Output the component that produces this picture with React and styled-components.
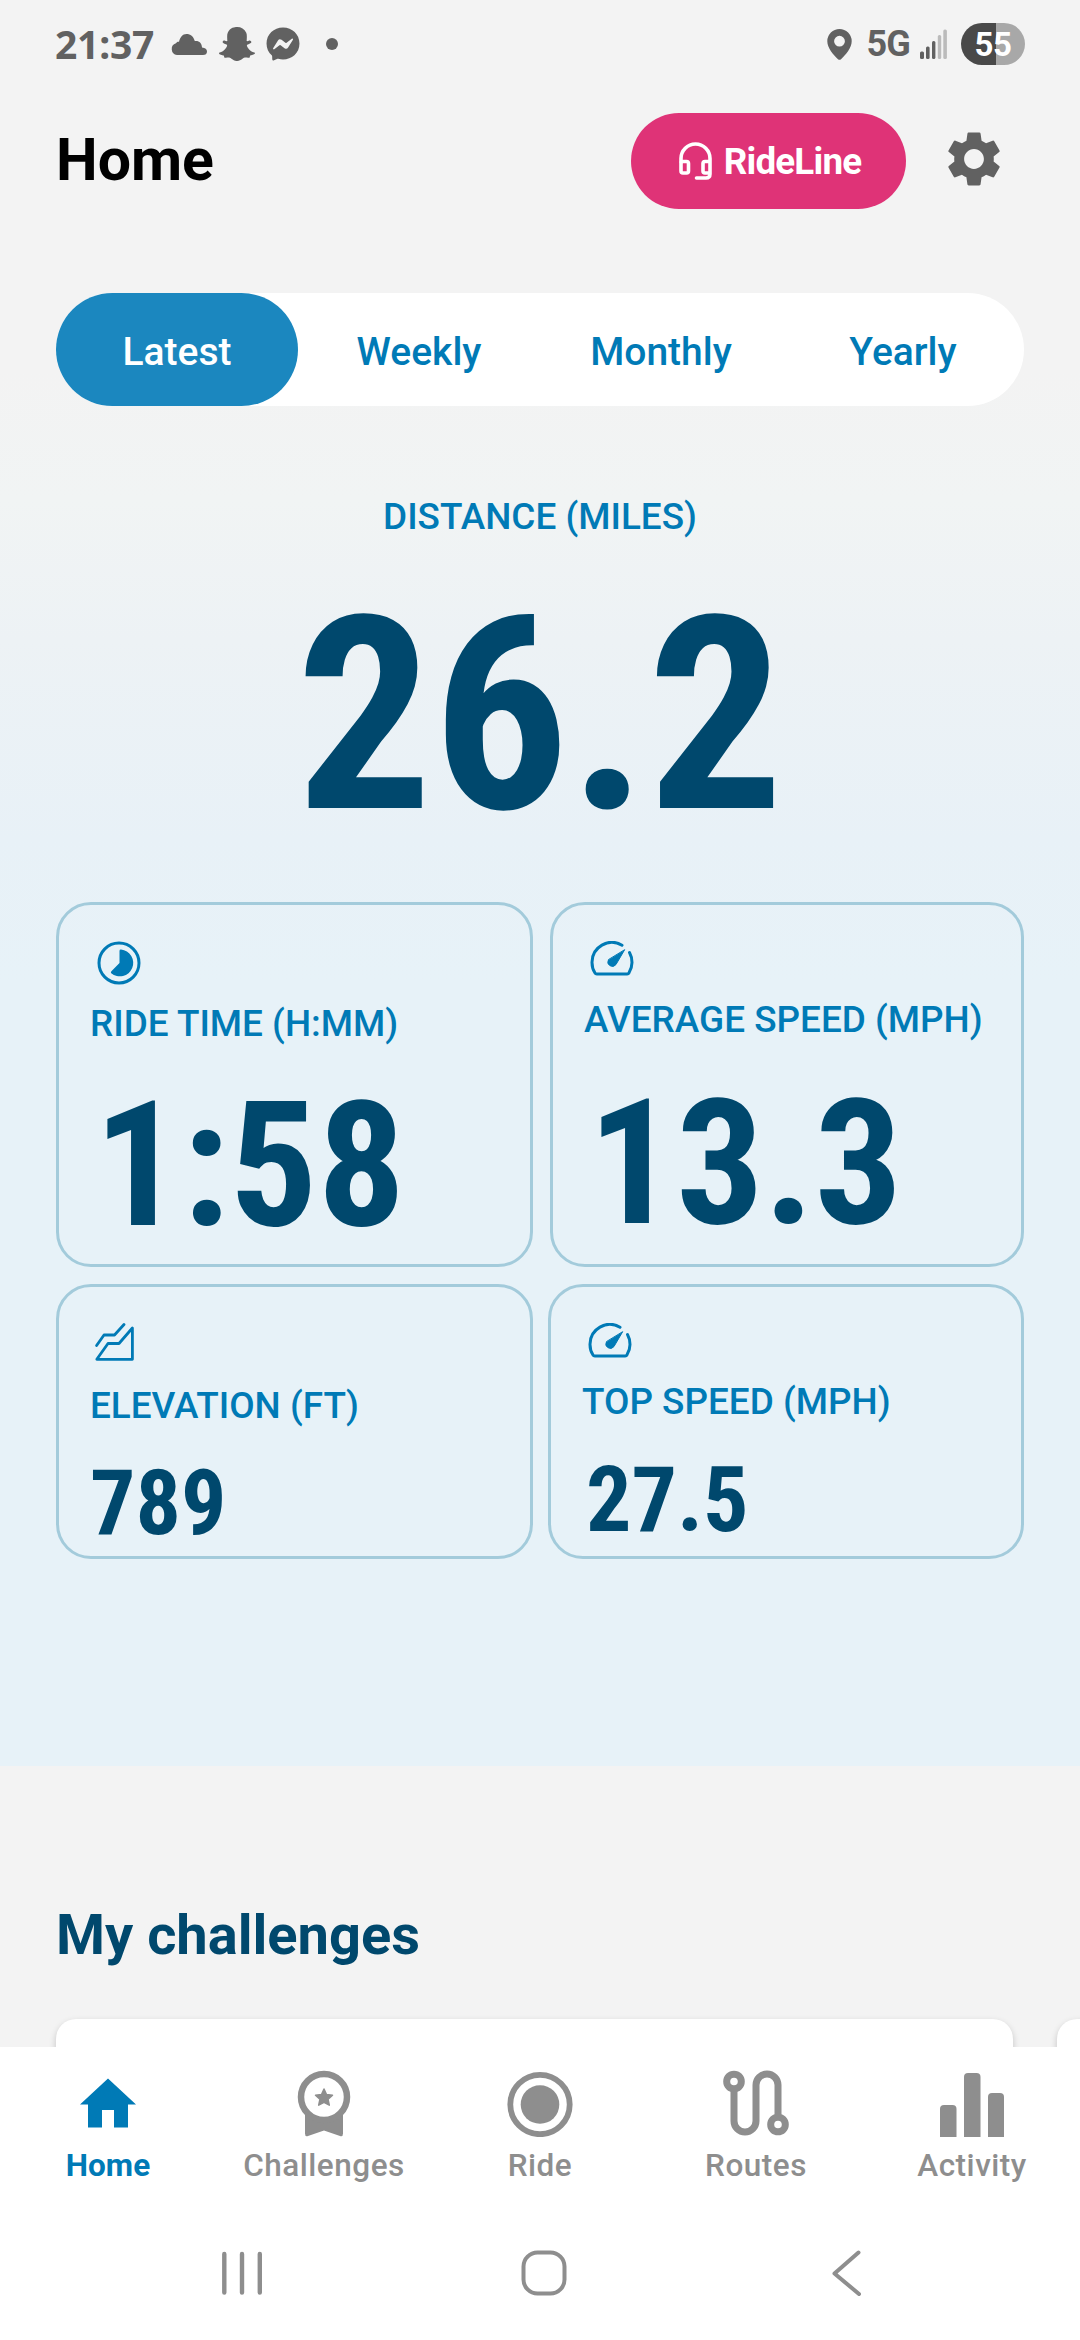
import React from "react";
import styled, { createGlobalStyle } from "styled-components";
import { FaSnapchatGhost, FaFacebookMessenger } from "react-icons/fa";
import { MdSettings } from "react-icons/md";

const color = {
  page: "#f3f3f3",
  blue: "#007ab6",
  tab: "#1b87bf",
  navy: "#00486d",
  pink: "#df3377",
  outline: "#a3cbdb",
  sky: "#e7f2f8",
  status: "#616161",
  muted: "#8e8e8e",
};

const GlobalStyle = createGlobalStyle`
  *, *::before, *::after { box-sizing: border-box; }
  body { margin: 0; background: ${color.page}; font-family: Roboto, "Liberation Sans", sans-serif; }
  svg { display: block; flex: none; }
  h1, h2, p { margin: 0; }
  button { border: 0; padding: 0; background: none; font-family: inherit; }
`;

const Screen = styled.div`
  width: 1080px;
  height: 2340px;
  display: flex;
  flex-direction: column;
  overflow: hidden;
  background: ${color.page};
`;

const Scroll = styled.main`
  height: 2047px;
  flex: none;
  overflow: hidden;
`;

const Summary = styled.section`
  height: 1766px;
  background: linear-gradient(180deg, #f3f3f3 0px, #f3f3f3 370px, #f1f4f4 500px, #edf2f5 640px, #e8f1f7 840px, ${color.sky} 980px);
`;

/* ---------- status bar ---------- */

const StatusBar = styled.div`
  height: 88px;
  padding: 0 55px;
  display: flex;
  align-items: center;
  justify-content: space-between;
  color: ${color.status};
`;

const StatusGroup = styled.div`
  display: flex;
  align-items: center;
`;

const Clock = styled.span`
  width: 116px;
  padding-bottom: 1px;
  font: 700 39px/46px "Noto Sans", Roboto, sans-serif;
  letter-spacing: -0.2px;
`;

const StatusIcon = styled.span`
  margin-left: ${(p) => p.$gap}px;
  display: flex;
`;

const MoreDot = styled.span`
  width: 12px;
  height: 12px;
  margin-left: 26px;
  border-radius: 50%;
  background: ${color.status};
`;

const Network = styled.span`
  margin: 0 10px 0 14px;
  font-size: 36px;
  font-weight: 700;
  line-height: 46px;
  letter-spacing: -0.8px;
`;

const Battery = styled.span`
  width: 64px;
  height: 42px;
  margin-left: 13px;
  border-radius: 21px;
  background: linear-gradient(90deg, #494949 0 35px, #a8a8a8 35px);
  color: #fff;
  font-size: 33px;
  font-weight: 700;
  line-height: 43px;
  letter-spacing: -0.5px;
  text-align: center;
`;

/* ---------- header ---------- */

const Header = styled.header`
  height: 146px;
  padding: 0 80px 0 56px;
  display: flex;
  align-items: center;
`;

const Title = styled.h1`
  flex: 1;
  margin-top: -2px;
  color: #000;
  font-size: 59px;
  font-weight: 700;
  line-height: 70px;
`;

const RideLineButton = styled.button`
  width: 275px;
  height: 96px;
  margin-right: 41px;
  padding-left: 3px;
  border-radius: 48px;
  display: flex;
  align-items: center;
  justify-content: center;
  gap: 12px;
  background: ${color.pink};
  color: #fff;
  font-size: 36.75px;
  font-weight: 700;
  letter-spacing: -0.8px;
`;

const SettingsButton = styled.button`
  width: 53px;
  padding-bottom: 5px;
  display: flex;
  justify-content: center;
  color: ${color.status};
`;

/* ---------- tabs ---------- */

const Tabs = styled.nav`
  height: 113px;
  margin: 59px 56px 0;
  display: grid;
  grid-template-columns: repeat(4, 1fr);
  border-radius: 57px;
  background: #fff;
`;

const Tab = styled.button`
  height: 113px;
  padding-top: 4px;
  border-radius: 57px;
  background: ${(p) => (p.$active ? color.tab : "transparent")};
  color: ${(p) => (p.$active ? "#fff" : color.blue)};
  font-size: 39px;
  font-weight: 500;
  line-height: 50px;
`;

/* ---------- stats ---------- */

const Label = styled.p`
  color: ${color.blue};
  font-size: 36.9px;
  font-weight: 500;
  line-height: 46px;
  white-space: nowrap;
`;

const Value = styled.p`
  color: ${color.navy};
  font-family: "Roboto Condensed", Roboto, sans-serif;
  font-stretch: 75%;
  font-weight: 700;
  font-size: ${(p) => p.$size}px;
  line-height: 1.1;
  white-space: nowrap;
`;

const Hero = styled.div`
  height: 496px;
  padding-top: 88px;
  display: flex;
  flex-direction: column;
  align-items: center;
  gap: 28px;
`;

const CardRow = styled.div`
  margin: 0 56px 17px;
  display: grid;
  grid-template-columns: 477px 1fr;
  column-gap: ${(p) => p.$gap}px;
  height: ${(p) => p.$height}px;
`;

const Card = styled.article`
  padding: 36px 0 0 31px;
  border: 3px solid ${color.outline};
  border-radius: 35px;
  display: flex;
  flex-direction: column;
`;

const CardIcon = styled.div`
  height: ${(p) => p.$height}px;
  padding-left: ${(p) => p.$indent}px;
  color: ${color.blue};
`;

const CardValue = styled.div`
  padding: ${(p) => p.$top}px 0 0 ${(p) => p.$indent}px;
`;

/* ---------- challenges ---------- */

const Challenges = styled.section`
  padding: 135px 0 0 56px;
`;

const SectionTitle = styled.h2`
  color: ${color.navy};
  font-size: 56px;
  font-weight: 700;
  line-height: 68px;
`;

const Carousel = styled.div`
  margin-top: 50px;
  display: flex;
  gap: 44px;
`;

const ChallengeCard = styled.div`
  width: 957px;
  height: 320px;
  flex: none;
  border-radius: 20px;
  background: #fff;
  box-shadow: 0 3px 7px rgba(0, 0, 0, 0.2);
`;

/* ---------- bottom navigation ---------- */

const BottomNav = styled.nav`
  height: 159px;
  flex: none;
  display: grid;
  grid-template-columns: repeat(5, 1fr);
  background: #fff;
`;

const NavItem = styled.div`
  display: flex;
  flex-direction: column;
  align-items: center;
  color: ${(p) => (p.$active ? color.blue : color.muted)};
  font-size: 31.5px;
  font-weight: ${(p) => (p.$active ? 700 : 500)};
  line-height: 38px;
  letter-spacing: ${(p) => (p.$active ? 0.1 : 0.5)}px;
`;

const NavIcon = styled.div`
  height: 100px;
  padding-top: 20px;
`;

const SystemNav = styled.div`
  height: 134px;
  flex: none;
  padding: 42px 210px 0 217px;
  display: flex;
  justify-content: space-between;
  background: #fff;
`;

/* ---------- icons ---------- */

const CloudIcon = () => (
  <svg width="36" height="21" viewBox="0 0 36 21" fill="currentColor">
    <path d="M6 21a6 6 0 0 1-1-11.7C5.5 8.200 6.500 7.600 8 7.800 9 3.500 11.500 0 15.500 0c4 0 7 2.500 8.300 7 4.500-.5 7 2 7.200 6.500 3.300.2 5 1.800 5 3.900 0 2.200-1.500 3.600-4 3.600Z" />
  </svg>
);

const PinIcon = () => (
  <svg width="25" height="31" viewBox="0 0 25 31" fill="currentColor" fillRule="evenodd">
    <path d="M12.500 0A12.200 12.200 0 0 1 24.700 12.200C24.700 19 18.500 26 14 30.200q-1.500 1.300-3 0C6.500 26 .3 19 .3 12.200A12.200 12.200 0 0 1 12.500 0Zm0 6.800a5.400 5.400 0 1 0 0 10.800 5.400 5.400 0 0 0 0-10.800Z" />
  </svg>
);

const SignalIcon = () => (
  <svg width="28" height="30" viewBox="0 0 28 30" fill="currentColor">
    <rect x="0" y="22.500" width="4" height="7.500" rx="1.500" />
    <rect x="6" y="17.500" width="3.600" height="12.500" rx="1.500" />
    <rect x="12" y="12" width="3.400" height="18" rx="1.500" />
    <rect x="17.800" y="6" width="3.400" height="24" rx="1.500" opacity=".38" />
    <rect x="23.300" y="0.500" width="3.600" height="29.500" rx="1.500" opacity=".38" />
  </svg>
);

const HeadsetIcon = () => (
  <svg width="33" height="38" viewBox="0 0 33 38" fill="none" stroke="currentColor" strokeWidth="3.600">
    <path d="M2 20V16.500a14.500 14.500 0 0 1 29 0V32q0 4-4 4H17.500" strokeLinecap="round" />
    <rect x="2" y="19.500" width="7.500" height="11.500" rx="2" />
    <path d="M31 19.500h-5q-2 0-2 2V29q0 2 2 2h5" />
  </svg>
);

const TimeIcon = () => (
  <svg width="44" height="44" viewBox="0 0 44 44" fill="currentColor">
    <circle cx="22" cy="22" r="20" fill="none" stroke="currentColor" strokeWidth="3" />
    <path d="M22.500 22V10q0-1.500 1.500-1.400a13.400 13.400 0 1 1-9.800 23.600q-.8-.9.200-1.900Z" />
  </svg>
);

const SpeedIcon = () => (
  <svg width="44" height="36" viewBox="0 0 44 36" fill="none" stroke="currentColor" strokeWidth="3" strokeLinecap="round" strokeLinejoin="round">
    <path d="M32 4.300A19.800 19.800 0 0 0 2 21.500q0 6 3 10.500.6 1 1.800 1h30.400q1.200 0 1.700-1Q42 27 42 21.500q0-5.500-2.500-10" />
    <path d="M34.500 9 26 23.500a4.500 4.500 0 0 1-7.700-4.600Z" fill="currentColor" strokeWidth="1" />
  </svg>
);

const ElevationIcon = () => (
  <svg width="39" height="38" viewBox="0 0 39 38" fill="none" stroke="currentColor" strokeWidth="2.800" strokeLinecap="round" strokeLinejoin="round">
    <path d="M1.600 22.500 9 12h10.500L29 1.500" />
    <path d="M1.800 36.300 13 20.500h11L37.400 5v31.300Z" />
  </svg>
);

const HomeIcon = () => (
  <svg width="66" height="70" viewBox="0 0 66 70" fill="currentColor">
    <path d="M33 11.500 61 37.500H53V60.500H39V43H27V60.500H13V37.500H5Z" />
  </svg>
);

const BadgeIcon = () => (
  <svg width="66" height="70" viewBox="0 0 66 70" fill="currentColor">
    <path d="M14 44H52V66.500q0 3.500-3 2.500L33 63.500 17 69q-3 1-3-2.500Z" />
    <circle cx="33" cy="30" r="23" fill="#fff" stroke="currentColor" strokeWidth="6.500" />
    <path d="m33 22 2.500 5.500 6 .7-4.400 4.100 1.200 5.900L33 35.300l-5.300 2.900 1.200-5.900-4.400-4.100 6-.7Z" stroke="currentColor" strokeWidth="1.500" strokeLinejoin="round" />
  </svg>
);

const RideIcon = () => (
  <svg width="66" height="70" viewBox="0 0 66 70" fill="currentColor">
    <circle cx="33" cy="37.500" r="29.700" fill="none" stroke="currentColor" strokeWidth="5.800" />
    <circle cx="33" cy="37.500" r="19.300" />
  </svg>
);

const RoutesIcon = () => (
  <svg width="66" height="70" viewBox="0 0 66 70" fill="none" stroke="currentColor" strokeWidth="7">
    <circle cx="11" cy="14.500" r="7.300" />
    <circle cx="55" cy="57.500" r="7.300" />
    <path d="M11 22V54a11 11 0 0 0 22 0V18a11 11 0 0 1 22 0V50" />
  </svg>
);

const ActivityIcon = () => (
  <svg width="66" height="70" viewBox="0 0 66 70" fill="currentColor">
    <path d="M1 70V42q0-4 4-4h8.500q4 0 4 4V70Z" />
    <path d="M25 70V10q0-4 4-4h8.500q4 0 4 4V70Z" />
    <path d="M49 70V30q0-4 4-4h8q4 0 4 4V70Z" />
  </svg>
);

const RecentsGlyph = () => (
  <svg width="50" height="50" viewBox="0 0 50 50" stroke={color.muted} strokeWidth="4.400" strokeLinecap="round">
    <path d="M7.300 6V44.500M25 6V44.500M42.800 6V44.500" />
  </svg>
);

const HomeGlyph = () => (
  <svg width="50" height="50" viewBox="0 0 50 50" fill="none" stroke={color.muted} strokeWidth="4">
    <rect x="4.500" y="4.500" width="41" height="41" rx="14" />
  </svg>
);

const BackGlyph = () => (
  <svg width="50" height="50" viewBox="0 0 50 50" fill="none" stroke={color.muted} strokeWidth="4" strokeLinecap="round" strokeLinejoin="round">
    <path d="M38.500 4.500 14.500 25.500 39 46" />
  </svg>
);

const tabs = ["Latest", "Weekly", "Monthly", "Yearly"];

const navItems = [
  { name: "Home", Icon: HomeIcon },
  { name: "Challenges", Icon: BadgeIcon },
  { name: "Ride", Icon: RideIcon },
  { name: "Routes", Icon: RoutesIcon },
  { name: "Activity", Icon: ActivityIcon },
];

function Stat({ icon, iconHeight, iconIndent, label, value, size, valueTop, valueIndent }) {
  return (
    <Card>
      <CardIcon $height={iconHeight} $indent={iconIndent}>{icon}</CardIcon>
      <Label>{label}</Label>
      <CardValue $top={valueTop} $indent={valueIndent}>
        <Value $size={size}>{value}</Value>
      </CardValue>
    </Card>
  );
}

export default function App() {
  return (
    <>
      <GlobalStyle />
      <Screen>
        <Scroll>
          <Summary>
            <StatusBar>
              <StatusGroup>
                <Clock>21:37</Clock>
                <CloudIcon />
                <StatusIcon $gap={12}><FaSnapchatGhost size={36} /></StatusIcon>
                <StatusIcon $gap={11}><FaFacebookMessenger size={34} /></StatusIcon>
                <MoreDot />
              </StatusGroup>
              <StatusGroup>
                <PinIcon />
                <Network>5G</Network>
                <SignalIcon />
                <Battery>55</Battery>
              </StatusGroup>
            </StatusBar>

            <Header>
              <Title>Home</Title>
              <RideLineButton>
                <HeadsetIcon />
                RideLine
              </RideLineButton>
              <SettingsButton aria-label="Settings">
                <MdSettings size={66} />
              </SettingsButton>
            </Header>

            <Tabs>
              {tabs.map((name, i) => (
                <Tab key={name} $active={i === 0}>{name}</Tab>
              ))}
            </Tabs>

            <Hero>
              <Label>DISTANCE (MILES)</Label>
              <Value $size={270}>26.2</Value>
            </Hero>

            <CardRow $height={365} $gap={17}>
              <Stat icon={<TimeIcon />} iconHeight={60} iconIndent={7} label="RIDE TIME (H:MM)" value="1:58" size={174} valueTop={23} valueIndent={4} />
              <Stat icon={<SpeedIcon />} iconHeight={56} iconIndent={6} label="AVERAGE SPEED (MPH)" value="13.3" size={174} valueTop={25} valueIndent={4} />
            </CardRow>
            <CardRow $height={275} $gap={15}>
              <Stat icon={<ElevationIcon />} iconHeight={60} iconIndent={5} label="ELEVATION (FT)" value="789" size={90} valueTop={25} valueIndent={0} />
              <Stat icon={<SpeedIcon />} iconHeight={56} iconIndent={6} label="TOP SPEED (MPH)" value="27.5" size={90} valueTop={26} valueIndent={4} />
            </CardRow>
          </Summary>

          <Challenges>
            <SectionTitle>My challenges</SectionTitle>
            <Carousel>
              <ChallengeCard />
              <ChallengeCard />
            </Carousel>
          </Challenges>
        </Scroll>

        <BottomNav>
          {navItems.map(({ name, Icon }, i) => (
            <NavItem key={name} $active={i === 0}>
              <NavIcon><Icon /></NavIcon>
              {name}
            </NavItem>
          ))}
        </BottomNav>

        <SystemNav>
          <RecentsGlyph />
          <HomeGlyph />
          <BackGlyph />
        </SystemNav>
      </Screen>
    </>
  );
}
